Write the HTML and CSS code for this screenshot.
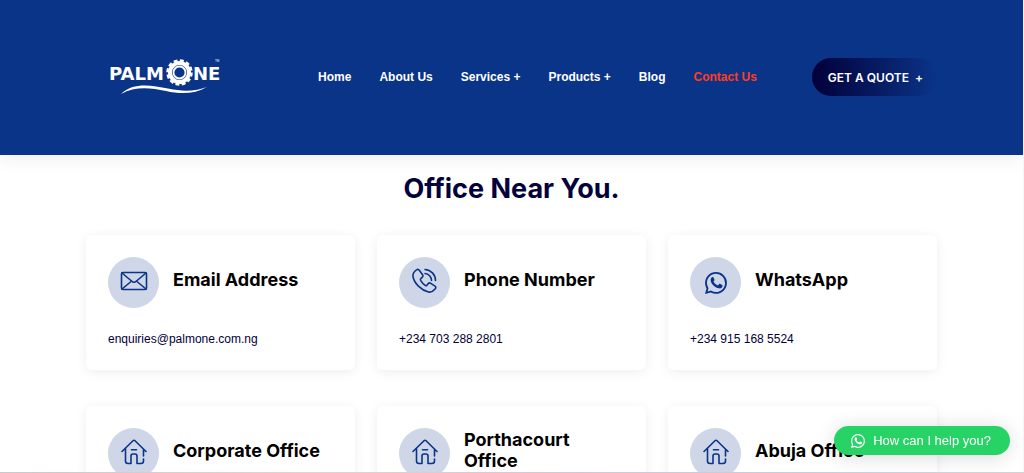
FILE: index.html
```html
<!DOCTYPE html>
<html lang="en">
<head>
    <meta charset="UTF-8">
    <meta name="viewport" content="width=device-width, initial-scale=1.0">
    <title>Palmone - Contact Us</title>
    <link rel="stylesheet" href="styles.css">
</head>
<body>
    <!-- Shared icons -->
    <svg class="sprite" width="0" height="0">
        <symbol id="icon-home" viewBox="0 0 26 26">
            <path d="M1 12.500 12 1.700a1.500 1.500 0 0 1 2 0L25 12.500M4.500 9.500V22A2.500 2.500 0 0 0 7 24.500h3V17a2 2 0 0 1 2-2h2a2 2 0 0 1 2 2v7.500h4a2.500 2.500 0 0 0 2.500-2.500v-2M22.500 10.500V17M10.500 10.800h5"/>
        </symbol>
        <symbol id="icon-whatsapp" viewBox="0 0 16 16">
            <path d="M13.601 2.326A7.854 7.854 0 0 0 7.994 0C3.627 0 .068 3.558.064 7.926c0 1.399.366 2.760 1.057 3.965L0 16l4.204-1.102a7.933 7.933 0 0 0 3.790.965h.004c4.368 0 7.926-3.558 7.930-7.930A7.898 7.898 0 0 0 13.600 2.326zM7.994 14.521a6.573 6.573 0 0 1-3.356-.920l-.240-.144-2.494.654.666-2.433-.156-.251a6.560 6.560 0 0 1-1.007-3.505c0-3.626 2.957-6.584 6.591-6.584a6.560 6.560 0 0 1 4.660 1.931 6.557 6.557 0 0 1 1.928 4.660c-.004 3.639-2.961 6.592-6.592 6.592z"/>
            <path d="M5.300 3.700c.4-.2.700-.1.900.3l.7 1.600c.1.300 0 .500-.7 1.300.8 1.500 1.800 2.300 3.200 2.900l.9-1.100c.2-.2.400-.2.600-.1l1.600.8c.300.200.3.400.2.900-.3 1.100-1.300 1.700-2.400 1.600C7.400 11.600 4.200 8.600 4.100 6c0-1 .5-1.900 1.200-2.300z"/>
        </symbol>
    </svg>

    <div class="page">
        <header class="header">
            <div class="container header-inner">
                <a class="logo" href="#" aria-label="Palmone">
                    <svg width="112" height="38" viewBox="0 0 112 38">
                        <text class="logo-text" x="1" y="22">PALM</text>
                        <text class="logo-text" x="85" y="22">NE</text>
                        <text class="logo-tm" x="107" y="4">TM</text>
                        <circle cx="71.500" cy="14.500" r="11" fill="#0a3488"/>
                        <circle cx="71.500" cy="14.500" r="9.500" fill="none" stroke="#fff" stroke-width="4"/>
                        <circle cx="71.500" cy="14.500" r="12" fill="none" stroke="#fff" stroke-width="2.500" stroke-dasharray="3.900 2.383"/>
                        <circle cx="71.500" cy="14.500" r="6" fill="none" stroke="#fff" stroke-width="1.800"/>
                        <path d="M13 36C25 24 43 27 60 30.500 76 34 88 33 99 29 87 36 73 36.500 58 33 42 29.500 27 28 13 36z" fill="#fff"/>
                    </svg>
                </a>
                <nav class="nav">
                    <a href="#">Home</a>
                    <a href="#">About Us</a>
                    <a href="#">Services +</a>
                    <a href="#">Products +</a>
                    <a href="#">Blog</a>
                    <a class="active" href="#">Contact Us</a>
                </nav>
                <a class="quote-btn" href="#">GET A QUOTE <span>+</span></a>
            </div>
        </header>

        <main class="container offices">
            <h1 class="section-title">Office Near You.</h1>
            <div class="cards">
                <div class="card">
                    <div class="card-head">
                        <div class="card-icon">
                            <svg width="28" height="28" viewBox="0 0 28 28">
                                <rect x="1.500" y="5.500" width="25" height="17" rx="1.500"/>
                                <path d="M2 6 11.500 14q2.500 2.500 5 0L26 6M2 22l8.500-7M26 22l-8.500-7"/>
                            </svg>
                        </div>
                        <h2>Email Address</h2>
                    </div>
                    <a class="card-link" href="mailto:enquiries@palmone.com.ng">enquiries@palmone.com.ng</a>
                </div>
                <div class="card">
                    <div class="card-head">
                        <div class="card-icon">
                            <svg width="28" height="28" viewBox="0 0 28 28">
                                <path d="M5.500 2.800C3 4.500 1.500 6.500 2 9.500c1.200 7 8 13.500 15.500 15.500 3 .8 5-1 6.800-3.200.8-1 .6-2-.3-2.700l-4.200-2.700c-1-.7-2-.5-2.700.4l-1 1.300c-.5.700-1.200.700-1.900.2-2-1.400-3.500-3-4.600-5-.4-.8-.2-1.400.4-1.900l1.200-1c.9-.7 1-1.700.4-2.600L8.500 3.500c-.8-1.200-1.800-1.500-3-.7z"/>
                                <path d="M14 2.500A11 11 0 0 1 24.500 13.500M14 6.500a7 7 0 0 1 6.500 7"/>
                            </svg>
                        </div>
                        <h2>Phone Number</h2>
                    </div>
                    <a class="card-link" href="tel:+2347032882801">+234 703 288 2801</a>
                </div>
                <div class="card">
                    <div class="card-head">
                        <div class="card-icon card-icon-solid">
                            <svg width="22" height="22"><use href="#icon-whatsapp"/></svg>
                        </div>
                        <h2>WhatsApp</h2>
                    </div>
                    <a class="card-link" href="tel:+2349151685524">+234 915 168 5524</a>
                </div>
                <div class="card">
                    <div class="card-head">
                        <div class="card-icon">
                            <svg width="26" height="26"><use href="#icon-home"/></svg>
                        </div>
                        <h2>Corporate Office</h2>
                    </div>
                </div>
                <div class="card">
                    <div class="card-head">
                        <div class="card-icon">
                            <svg width="26" height="26"><use href="#icon-home"/></svg>
                        </div>
                        <h2>Porthacourt Office</h2>
                    </div>
                </div>
                <div class="card">
                    <div class="card-head">
                        <div class="card-icon">
                            <svg width="26" height="26"><use href="#icon-home"/></svg>
                        </div>
                        <h2>Abuja Office</h2>
                    </div>
                </div>
            </div>
        </main>
    </div>

    <button class="chat-btn" type="button">
        <svg width="14" height="14"><use href="#icon-whatsapp"/></svg>
        How can I help you?
    </button>
    <div class="bottom-line"></div>
</body>
</html>
```

FILE: styles.css
```css
* {
    margin: 0;
    padding: 0;
    box-sizing: border-box;
}

body {
    font-family: "Liberation Sans", Arial, sans-serif;
    font-size: 12px;
    background: #fff;
    color: #02003a;
}

a {
    color: inherit;
    text-decoration: none;
}

.sprite {
    position: absolute;
}

.page {
    height: 100vh;
    overflow: hidden;
    border-right: 1px solid #f4f6f9;
}

.container {
    width: 100%;
    max-width: 851px;
    margin: 0 auto;
}

/* Header */
.header {
    background: #0a3488;
    padding: 58px 0 59px;
    box-shadow: 0 0 20px rgba(0, 0, 0, 0.1);
}

.header-inner {
    display: flex;
    align-items: center;
    padding-left: 22px;
}

.logo,
.logo svg {
    display: block;
}

.logo svg {
    overflow: visible;
}

.logo-text {
    font-family: "DejaVu Sans", sans-serif;
    font-size: 18px;
    font-weight: bold;
    fill: #fff;
}

.logo-tm {
    font-size: 3px;
    fill: #fff;
}

.nav {
    display: flex;
    gap: 28px;
    margin-left: auto;
    margin-right: 55px;
    color: #fff;
    font-weight: bold;
    line-height: 20px;
    white-space: nowrap;
}

.nav .active {
    color: #ff3c1f;
}

.quote-btn {
    display: flex;
    align-items: center;
    gap: 6px;
    height: 38px;
    padding: 0 14px 0 16px;
    border-radius: 19px;
    background: linear-gradient(90deg, #02003a, #0a3488);
    color: #fff;
    font-family: Inter, sans-serif;
    font-weight: 600;
    white-space: nowrap;
}

/* Offices */
.offices {
    padding-top: 17px;
}

.section-title {
    margin-bottom: 29px;
    font-family: Inter, sans-serif;
    font-size: 27px;
    font-weight: 700;
    line-height: 34px;
    text-align: center;
}

.cards {
    display: grid;
    grid-template-columns: repeat(3, 1fr);
    gap: 36px 22px;
}

.card {
    padding: 22px 22px 21px;
    border-radius: 6px;
    background: #fff;
    box-shadow: 0 2px 12px rgba(0, 0, 0, 0.07);
}

.card-head {
    display: flex;
    gap: 14px;
    align-items: center;
}

.card-icon {
    flex: none;
    display: flex;
    align-items: center;
    justify-content: center;
    width: 51px;
    height: 51px;
    padding-bottom: 4px;
    border-radius: 50%;
    background: #ced6e7;
    color: #0a3488;
}

.card-icon svg {
    fill: none;
    stroke: currentColor;
    stroke-width: 1.6;
    stroke-linecap: round;
    stroke-linejoin: round;
}

.card-icon-solid {
    padding-bottom: 0;
}

.card-icon-solid svg {
    fill: currentColor;
    stroke: none;
}

.card h2 {
    padding-bottom: 7px;
    color: #000;
    font-family: Inter, sans-serif;
    font-size: 18px;
    font-weight: 700;
    line-height: 21px;
}

.card-link {
    display: block;
    margin-top: 21px;
    line-height: 20px;
}

/* Chat widget */
.chat-btn {
    position: fixed;
    right: 14px;
    bottom: 18px;
    display: flex;
    align-items: center;
    gap: 8px;
    height: 29px;
    padding: 0 19px 0 17px;
    border: none;
    border-radius: 15px;
    background: #28d366;
    color: #fff;
    font-family: inherit;
    font-size: 13px;
    box-shadow: 0 2px 20px rgba(0, 0, 0, 0.15);
    cursor: pointer;
}

.chat-btn svg {
    fill: currentColor;
}

.bottom-line {
    position: fixed;
    left: 0;
    right: 0;
    bottom: 0;
    height: 1px;
    background: linear-gradient(90deg, #c9c9cb, #e3d3d3 30%, #d5c6d3 55%, #c5cfdd 80%, #d3d3d6);
}
```
